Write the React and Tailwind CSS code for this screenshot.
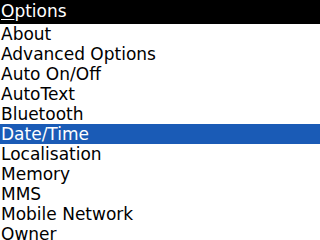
import React from "react";

const items = [
  "About",
  "Advanced Options",
  "Auto On/Off",
  "AutoText",
  "Bluetooth",
  "Date/Time",
  "Localisation",
  "Memory",
  "MMS",
  "Mobile Network",
  "Owner",
];

export default function App() {
  return (
    <div
      className="w-[320px] h-[240px] overflow-hidden bg-white flex flex-col"
      style={{ fontFamily: '"DejaVu Sans", sans-serif' }}
    >
      <div className="h-[24px] bg-black text-white text-[17px] leading-[22px] pl-[1px] shrink-0">
        <span className="underline decoration-1 underline-offset-2">O</span>ptions
      </div>
      {items.map((it, i) => (
        <div
          key={it}
          className={
            i === 5
              ? "h-[20px] shrink-0 bg-[#1a5bb6] text-white text-[17px] leading-[20px] pl-[1px]"
              : "h-[20px] shrink-0 text-black text-[17px] leading-[20px] pl-[1px]"
          }
        >
          {it}
        </div>
      ))}
    </div>
  );
}
